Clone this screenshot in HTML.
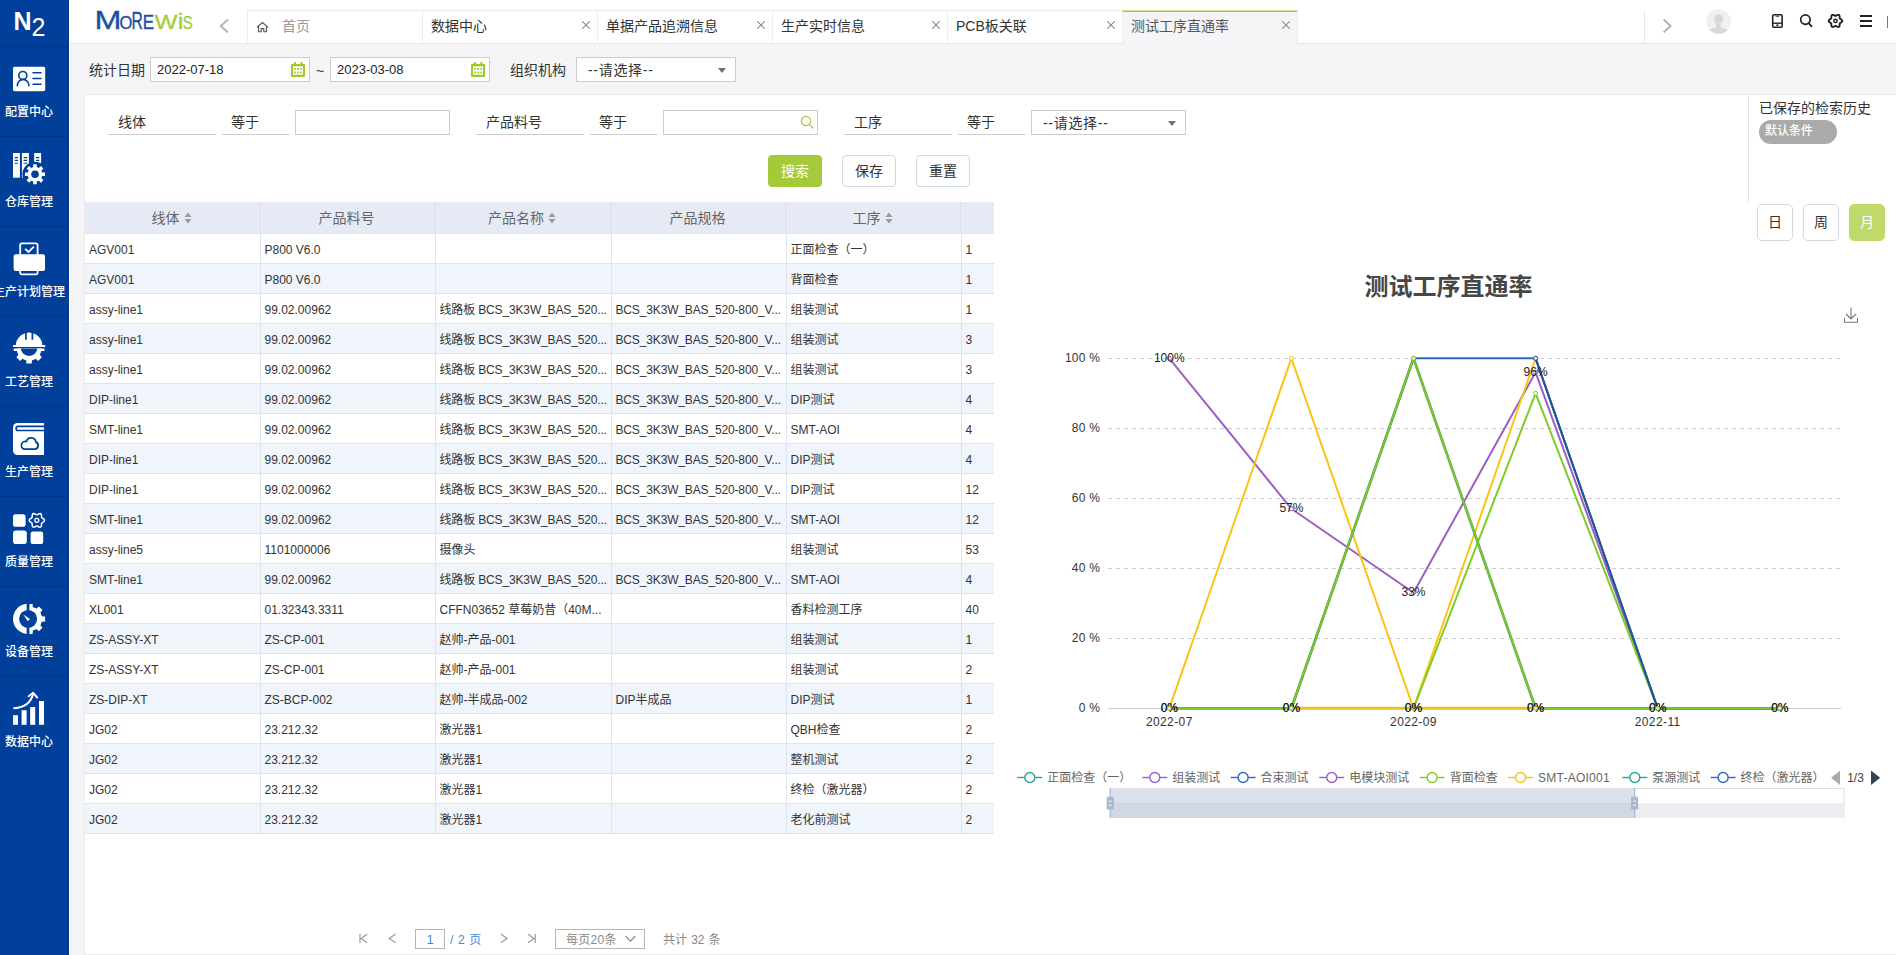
<!DOCTYPE html><html lang="zh"><head><meta charset="utf-8"><title>测试工序直通率</title><style>
*{box-sizing:border-box;margin:0;padding:0}
html,body{width:1896px;height:955px;overflow:hidden;background:#f5f5f7;font-family:"Liberation Sans", "Noto Sans CJK SC", sans-serif;font-size:14px;color:#333}
.abs{position:absolute}
#side{position:absolute;left:0;top:0;width:69px;height:955px;background:#00409a;box-shadow:inset -1px 0 0 #003792,1px 0 0 #fff;z-index:3}
#side .it{position:absolute;left:0;width:69px;height:90px;border-top:1px solid #003585}
#side .it svg{position:absolute;left:12px;top:15px;width:34px;height:36px}
#side .it span{position:absolute;left:-31px;width:120px;top:56px;text-align:center;color:#fff;font-size:12px;line-height:18px;font-weight:500;white-space:nowrap}
#head{position:absolute;left:69px;top:0;width:1827px;height:44px;background:#fff;border-bottom:1px solid #e6e6e6}
.tab{position:absolute;top:10px;height:34px;width:175px;border-left:1px solid #ececec;border-top:1px solid #ececec;font-size:14px;line-height:29px;padding-left:8px;color:#333;white-space:nowrap}
.tab .x{position:absolute;right:7px;top:10px;width:8px;height:8px}
#fbar{position:absolute;left:69px;top:44px;width:1827px;height:51px;background:#f5f5f7}
.inp{position:absolute;background:#fff;border:1px solid #ccc;font-size:13px;line-height:22px;color:#222;padding-left:6px;white-space:nowrap}
#main{position:absolute;left:84px;top:94px;width:1812px;height:861px;background:#fff;border:1px solid #ebebeb;border-right:none}
.lbl{position:absolute;font-size:14px;line-height:20px;color:#333;white-space:nowrap}
.ul{position:absolute;height:1px;background:#ccc}
.btn{position:absolute;top:155px;height:32px;width:54px;border-radius:4px;border:1px solid #d3d7e3;background:#fff;font-size:14px;line-height:30px;text-align:center;color:#333}
table{position:absolute;left:85px;top:202px;border-collapse:collapse;table-layout:fixed;width:909px}
th{height:31px;padding-right:2px;background:#e6eaf5;color:#666;font-weight:normal;font-size:14px;text-align:center;white-space:nowrap;overflow:hidden}
td{height:30px;font-size:12px;color:#333;padding-left:4px;border-right:1px solid #dfe3f0;border-top:1px solid #dfe3f0;white-space:nowrap;overflow:hidden}
tr.e td{background:#f0f4fb}
td:last-child{border-right:none}

td::before,.inp::before,.tab::before,.lbl::before{content:"\200b";font-family:"Noto Sans CJK SC",sans-serif}
</style></head><body>
<div id="side">
<svg class="abs" style="left:0;top:0" width="69" height="46" viewBox="0 0 69 46"><text x="13.5" y="30.3" font-family='&quot;Liberation Sans&quot;, &quot;Noto Sans CJK SC&quot;, sans-serif' font-size="25" font-weight="bold" fill="#fff">N</text><text x="31.5" y="36" font-family='&quot;Liberation Sans&quot;, &quot;Noto Sans CJK SC&quot;, sans-serif' font-size="25" fill="#fff">2</text></svg>
<div class="it" style="top:46px"><svg style="position:absolute;left:0;top:-1px;width:69px;height:90px" viewBox="0 0 69 90"><rect x="13" y="20.7" width="32.2" height="24.5" rx="1.6" fill="#fff"/><circle cx="22.8" cy="29.5" r="4" fill="none" stroke="#00409a" stroke-width="1.6"/><path d="M17.3 39.8 A5.8 6.4 0 0 1 28.9 39.8" fill="none" stroke="#00409a" stroke-width="1.6" stroke-linecap="round"/><path d="M33 26.8H41 M33 32.6H41 M33 38.3H41" stroke="#00409a" stroke-width="1.5" stroke-linecap="round"/></svg><span>配置中心</span></div>
<div class="it" style="top:136px"><svg style="position:absolute;left:0;top:-1px;width:69px;height:90px" viewBox="0 0 69 90"><rect x="13" y="17" width="6.9" height="24.7" fill="#fff"/><rect x="21.9" y="17" width="7" height="24.7" fill="#fff"/><rect x="34.2" y="17" width="6.9" height="14" fill="#fff"/><path d="M14.7 21.6H18 M14.7 24.4H18 M14.7 27.2H18 M23.6 21.6H27 M23.6 24.4H27 M23.6 27.2H27 M36 21.6H39.3 M36 24.4H39.3" stroke="#00409a" stroke-width="1.1"/><circle cx="35" cy="38.3" r="12.6" fill="#00409a"/><path d="M36.78 45.48 L36.78 48.34 L33.22 48.34 L33.22 45.48 L31.18 44.64 L29.16 46.66 L26.64 44.14 L28.66 42.12 L27.82 40.08 L24.96 40.08 L24.96 36.52 L27.82 36.52 L28.66 34.48 L26.64 32.46 L29.16 29.94 L31.18 31.96 L33.22 31.12 L33.22 28.26 L36.78 28.26 L36.78 31.12 L38.82 31.96 L40.84 29.94 L43.36 32.46 L41.34 34.48 L42.18 36.52 L45.04 36.52 L45.04 40.08 L42.18 40.08 L41.34 42.12 L43.36 44.14 L40.84 46.66 L38.82 44.64Z" fill="#fff"/><circle cx="35" cy="38.3" r="3.8" fill="#00409a"/></svg><span>仓库管理</span></div>
<div class="it" style="top:226px"><svg style="position:absolute;left:0;top:-1px;width:69px;height:90px" viewBox="0 0 69 90"><rect x="20.2" y="17.3" width="17.4" height="31" rx="1.8" fill="none" stroke="#fff" stroke-width="1.8"/><rect x="13.6" y="28.3" width="31.4" height="16.7" rx="2" fill="#fff"/><path d="M25.1 22.8L28.6 25.9L33.9 20.7" fill="none" stroke="#fff" stroke-width="1.8"/></svg><span>生产计划管理</span></div>
<div class="it" style="top:316px"><svg style="position:absolute;left:0;top:-1px;width:69px;height:90px" viewBox="0 0 69 90"><clipPath id="cg"><rect x="10" y="32.4" width="40" height="20"/></clipPath><g clip-path="url(#cg)"><path d="M31.95 44.06 L31.78 47.57 L26.42 47.57 L26.25 44.06 L22.73 42.60 L20.13 44.96 L16.34 41.17 L18.70 38.57 L17.24 35.05 L13.73 34.88 L13.73 29.52 L17.24 29.35 L18.70 25.83 L16.34 23.23 L20.13 19.44 L22.73 21.80 L26.25 20.34 L26.42 16.83 L31.78 16.83 L31.95 20.34 L35.47 21.80 L38.07 19.44 L41.86 23.23 L39.50 25.83 L40.96 29.35 L44.47 29.52 L44.47 34.88 L40.96 35.05 L39.50 38.57 L41.86 41.17 L38.07 44.96 L35.47 42.60Z" fill="#fff"/><circle cx="29.1" cy="32.2" r="12.4" fill="#fff"/><circle cx="29.1" cy="31.5" r="8.4" fill="#00409a"/></g><path d="M15.9 29.2 A13.2 12.4 0 0 1 42.3 29.2Z" fill="#fff"/><rect x="13" y="28.9" width="32.2" height="2.2" rx="0.6" fill="#fff"/><path d="M25.9 16.5V23.8 M32.4 16.5V23.8" stroke="#00409a" stroke-width="1.7"/><path d="M29.15 16.5V25.6" stroke="#fff" stroke-width="2.2"/></svg><span>工艺管理</span></div>
<div class="it" style="top:406px"><svg style="position:absolute;left:0;top:-1px;width:69px;height:90px" viewBox="0 0 69 90"><path d="M17.5 17H44V49H17.5A4.5 4.5 0 0 1 13 44.5V21.5A4.5 4.5 0 0 1 17.5 17Z" fill="#fff"/><path d="M44 20.3H18.2A2.1 2.1 0 0 0 18.2 24.5H44" fill="none" stroke="#00409a" stroke-width="1.7"/><path d="M24.2 43.1H34.8A3.6 3.6 0 0 0 36 36.2A4.9 4.9 0 0 0 26.4 35.6A3.9 3.9 0 0 0 24.2 43.1Z" fill="none" stroke="#00409a" stroke-width="1.8" stroke-linejoin="round"/></svg><span>生产管理</span></div>
<div class="it" style="top:496px"><svg style="position:absolute;left:0;top:-1px;width:69px;height:90px" viewBox="0 0 69 90"><rect x="13" y="18.2" width="12.6" height="12.6" rx="2.6" fill="#fff"/><rect x="13" y="34.6" width="13.8" height="13.4" rx="2.8" fill="#fff"/><rect x="30.6" y="35.4" width="12.6" height="12.6" rx="2.6" fill="#fff"/><path d="M44.45 24.35 L44.29 25.00 L43.84 25.58 L43.23 26.06 L42.58 26.44 L42.05 26.77 L41.70 27.15 L41.55 27.64 L41.52 28.27 L41.52 29.02 L41.41 29.79 L41.13 30.47 L40.65 30.93 L40.01 31.12 L39.28 31.02 L38.56 30.73 L37.91 30.36 L37.35 30.06 L36.85 29.95 L36.35 30.06 L35.79 30.36 L35.14 30.73 L34.42 31.02 L33.69 31.12 L33.05 30.93 L32.57 30.47 L32.29 29.79 L32.18 29.02 L32.18 28.27 L32.15 27.64 L32.00 27.15 L31.65 26.77 L31.12 26.44 L30.47 26.06 L29.86 25.58 L29.41 25.00 L29.25 24.35 L29.41 23.70 L29.86 23.12 L30.47 22.64 L31.12 22.26 L31.65 21.93 L32.00 21.55 L32.15 21.06 L32.18 20.43 L32.18 19.68 L32.29 18.91 L32.57 18.23 L33.05 17.77 L33.69 17.58 L34.42 17.68 L35.14 17.97 L35.79 18.34 L36.35 18.64 L36.85 18.75 L37.35 18.64 L37.91 18.34 L38.56 17.97 L39.28 17.68 L40.01 17.58 L40.65 17.77 L41.13 18.23 L41.41 18.91 L41.52 19.68 L41.52 20.43 L41.55 21.06 L41.70 21.55 L42.05 21.93 L42.58 22.26 L43.23 22.64 L43.84 23.12 L44.29 23.70Z" fill="none" stroke="#fff" stroke-width="1.5"/><circle cx="36.85" cy="24.35" r="2" fill="none" stroke="#fff" stroke-width="1.3"/></svg><span>质量管理</span></div>
<div class="it" style="top:586px"><svg style="position:absolute;left:0;top:-1px;width:69px;height:90px" viewBox="0 0 69 90"><clipPath id="cl"><rect x="10" y="14" width="16.8" height="40"/></clipPath><clipPath id="cr"><rect x="29.3" y="14" width="20" height="40"/></clipPath><g clip-path="url(#cl)"><circle cx="28.1" cy="32.9" r="15.1" fill="#fff"/></g><g clip-path="url(#cr)"><path d="M41.57 30.15 L45.09 30.40 L45.09 35.40 L41.57 35.65 L40.16 39.07 L42.47 41.74 L38.94 45.27 L36.27 42.96 L32.85 44.37 L32.60 47.89 L27.60 47.89 L27.35 44.37 L23.93 42.96 L21.26 45.27 L17.73 41.74 L20.04 39.07 L18.63 35.65 L15.11 35.40 L15.11 30.40 L18.63 30.15 L20.04 26.73 L17.73 24.06 L21.26 20.53 L23.93 22.84 L27.35 21.43 L27.60 17.91 L32.60 17.91 L32.85 21.43 L36.27 22.84 L38.94 20.53 L42.47 24.06 L40.16 26.73Z" fill="#fff"/><circle cx="30.1" cy="32.9" r="11.9" fill="#fff"/></g><circle cx="28.1" cy="32.9" r="9" fill="#00409a"/><rect x="26.8" y="14" width="2.5" height="40" fill="#00409a"/><path d="M23.4 28.6L30 32.9L27.7 35.3Z" fill="#fff"/></svg><span>设备管理</span></div>
<div class="it" style="top:676px"><svg style="position:absolute;left:0;top:-1px;width:69px;height:90px" viewBox="0 0 69 90"><rect x="13" y="39.2" width="5" height="9.6" fill="#fff"/><rect x="21.6" y="34.2" width="5" height="14.6" fill="#fff"/><rect x="30.2" y="31" width="5" height="17.8" fill="#fff"/><rect x="39" y="25" width="5" height="23.8" fill="#fff"/><path d="M14.2 32.2C24 31.5 31 27 33.2 17.5" fill="none" stroke="#fff" stroke-width="2" stroke-linecap="round"/><path d="M28.6 20.3L33.2 16.8L37.2 21.5" fill="none" stroke="#fff" stroke-width="2" stroke-linecap="round" stroke-linejoin="round"/></svg><span>数据中心</span></div>
</div>
<div id="head">
<svg style="position:absolute;left:0;top:0" width="1827" height="44" viewBox="0 0 1827 44"><g transform="translate(-69,0)"><text transform="translate(94.61,28.90) scale(0.3235,0.2551)" font-family="&quot;Liberation Sans&quot;, sans-serif" font-size="100" fill="#1d4f9f" stroke="#1d4f9f" stroke-width="0.35" style="vector-effect:non-scaling-stroke" vector-effect="non-scaling-stroke">M</text><text transform="translate(119.54,28.72) scale(0.1652,0.1789)" font-family="&quot;Liberation Sans&quot;, sans-serif" font-size="100" fill="#1d4f9f" stroke="#1d4f9f" stroke-width="0.35" style="vector-effect:non-scaling-stroke" vector-effect="non-scaling-stroke">O</text><text transform="translate(131.55,28.90) scale(0.1567,0.2357)" font-family="&quot;Liberation Sans&quot;, sans-serif" font-size="100" fill="#1d4f9f" stroke="#1d4f9f" stroke-width="0.35" style="vector-effect:non-scaling-stroke" vector-effect="non-scaling-stroke">R</text><text transform="translate(142.85,28.90) scale(0.1691,0.1986)" font-family="&quot;Liberation Sans&quot;, sans-serif" font-size="100" fill="#1d4f9f" stroke="#1d4f9f" stroke-width="0.35" style="vector-effect:non-scaling-stroke" vector-effect="non-scaling-stroke">E</text><text transform="translate(154.50,28.90) scale(0.2432,0.1986)" font-family="&quot;Liberation Sans&quot;, sans-serif" font-size="100" fill="#a6cd39" stroke="#a6cd39" stroke-width="0.35" style="vector-effect:non-scaling-stroke" vector-effect="non-scaling-stroke">W</text><text transform="translate(177.64,28.90) scale(0.2600,0.2260)" font-family="&quot;Liberation Sans&quot;, sans-serif" font-size="100" fill="#a6cd39" stroke="#a6cd39" stroke-width="0.35" style="vector-effect:non-scaling-stroke" vector-effect="non-scaling-stroke">i</text><text transform="translate(182.80,28.72) scale(0.1508,0.1847)" font-family="&quot;Liberation Sans&quot;, sans-serif" font-size="100" fill="#a6cd39" stroke="#a6cd39" stroke-width="0.35" style="vector-effect:non-scaling-stroke" vector-effect="non-scaling-stroke">S</text><path d="M228 19.4L220.8 26L228 32.6" fill="none" stroke="#b4b4b4" stroke-width="2"/><path d="M1644.5 10V43" stroke="#e6e6e6" stroke-width="1"/><path d="M1663.6 19.4L1670.6 26L1663.6 32.6" fill="none" stroke="#b4b4b4" stroke-width="2"/><clipPath id="av"><circle cx="1718.5" cy="21.5" r="12.3"/></clipPath><circle cx="1718.5" cy="21.5" r="12.3" fill="#f0f0f0"/><g clip-path="url(#av)" fill="#d9d9d9"><ellipse cx="1718.5" cy="19.3" rx="4.6" ry="5.4"/><path d="M1716.3 23h4.4v4.2c3 .8 6.6 1.8 7.8 3.2v6h-20v-6c1.2-1.4 4.8-2.4 7.8-3.2z"/></g><rect x="1772.7" y="14.7" width="9.4" height="12.6" rx="1.4" fill="none" stroke="#222" stroke-width="1.6"/><path d="M1772.7 23.2H1782.1" stroke="#222" stroke-width="1.4"/><path d="M1775.6 16.3H1779.2" stroke="#222" stroke-width="0.9"/><rect x="1776.4" y="24.4" width="2" height="1.6" fill="#222"/><circle cx="1805.4" cy="19.6" r="4.7" fill="none" stroke="#222" stroke-width="1.7"/><path d="M1808.9 23.3L1811.6 26.3" stroke="#222" stroke-width="1.8" stroke-linecap="round"/><path d="M1842.30 20.90 L1842.15 21.48 L1841.75 22.00 L1841.20 22.43 L1840.62 22.76 L1840.14 23.06 L1839.83 23.40 L1839.69 23.84 L1839.67 24.40 L1839.67 25.07 L1839.58 25.76 L1839.33 26.37 L1838.90 26.79 L1838.32 26.95 L1837.67 26.87 L1837.03 26.60 L1836.45 26.27 L1835.95 26.00 L1835.50 25.90 L1835.05 26.00 L1834.55 26.27 L1833.97 26.60 L1833.33 26.87 L1832.68 26.95 L1832.10 26.79 L1831.67 26.37 L1831.42 25.76 L1831.33 25.07 L1831.33 24.40 L1831.31 23.84 L1831.17 23.40 L1830.86 23.06 L1830.38 22.76 L1829.80 22.43 L1829.25 22.00 L1828.85 21.48 L1828.70 20.90 L1828.85 20.32 L1829.25 19.80 L1829.80 19.37 L1830.38 19.04 L1830.86 18.74 L1831.17 18.40 L1831.31 17.96 L1831.33 17.40 L1831.33 16.73 L1831.42 16.04 L1831.67 15.43 L1832.10 15.01 L1832.68 14.85 L1833.33 14.93 L1833.97 15.20 L1834.55 15.53 L1835.05 15.80 L1835.50 15.90 L1835.95 15.80 L1836.45 15.53 L1837.03 15.20 L1837.67 14.93 L1838.32 14.85 L1838.90 15.01 L1839.33 15.43 L1839.58 16.04 L1839.67 16.73 L1839.67 17.40 L1839.69 17.96 L1839.83 18.40 L1840.14 18.74 L1840.62 19.04 L1841.20 19.37 L1841.75 19.80 L1842.15 20.32Z" fill="none" stroke="#222" stroke-width="1.9" stroke-linejoin="round"/><circle cx="1835.5" cy="20.9" r="1.7" fill="none" stroke="#222" stroke-width="1.5"/><path d="M1860 16H1872 M1860 21H1872 M1860 26H1872" stroke="#222" stroke-width="2"/><path d="M1887.5 16V28" stroke="#777" stroke-width="1"/></g></svg>
<div class="tab" style="left:178px;color:#999;padding-left:34px"><svg style="position:absolute;left:7.5px;top:10px" width="13" height="12" viewBox="0 0 13 12"><path d="M0.8 6.4L6.5 1.5L12.2 6.4 M2.6 5.2V10.8H5.2V7.6H7.8V10.8H10.4V5.2" fill="none" stroke="#555" stroke-width="1.1" stroke-linejoin="round"/></svg>首页</div>
<div class="tab" style="left:353px">数据中心<svg class="x" viewBox="0 0 8 8"><path d="M0.3 0.3L7.7 7.7M7.7 0.3L0.3 7.7" stroke="#8a8a8a" stroke-width="1.1" fill="none"/></svg></div>
<div class="tab" style="left:528px">单据产品追溯信息<svg class="x" viewBox="0 0 8 8"><path d="M0.3 0.3L7.7 7.7M7.7 0.3L0.3 7.7" stroke="#8a8a8a" stroke-width="1.1" fill="none"/></svg></div>
<div class="tab" style="left:703px">生产实时信息<svg class="x" viewBox="0 0 8 8"><path d="M0.3 0.3L7.7 7.7M7.7 0.3L0.3 7.7" stroke="#8a8a8a" stroke-width="1.1" fill="none"/></svg></div>
<div class="tab" style="left:878px">PCB板关联<svg class="x" viewBox="0 0 8 8"><path d="M0.3 0.3L7.7 7.7M7.7 0.3L0.3 7.7" stroke="#8a8a8a" stroke-width="1.1" fill="none"/></svg></div>
<div class="tab" style="left:1053px;width:176px;height:35px;background:#f5f5f7;border-top:1px solid #cfe38f;box-shadow:inset 0 1px 0 #a4cb38;border-right:1px solid #ececec;line-height:29px;color:#555">测试工序直通率<svg class="x" viewBox="0 0 8 8"><path d="M0.3 0.3L7.7 7.7M7.7 0.3L0.3 7.7" stroke="#8a8a8a" stroke-width="1.1" fill="none"/></svg></div>
</div>
<div id="fbar"></div>
<div class="lbl" style="left:89px;top:59px">统计日期</div>
<div class="inp" style="left:150px;top:57px;width:160px;height:25px">2022-07-18<svg style="position:absolute;right:4px;top:4px" width="14" height="15" viewBox="0 0 14 15"><rect x="0" y="2.1" width="14" height="12.9" rx="1.2" fill="#a0c828"/><rect x="2.8" y="0" width="2.1" height="4" rx="0.6" fill="#a0c828"/><rect x="9.4" y="0" width="2.1" height="4" rx="0.6" fill="#a0c828"/><rect x="2" y="4.3" width="10" height="8.4" fill="#fff"/><path d="M3 6h1.8v1.8H3z M6.1 6h1.8v1.8H6.1z M9.3 6h1.8v1.8H9.3z M3 9.4h1.8v1.8H3z M6.1 9.4h1.8v1.8H6.1z M9.3 9.4h1.8v1.8H9.3z" fill="#a0c828"/></svg></div>
<div class="lbl" style="left:316px;top:60px">~</div>
<div class="inp" style="left:330px;top:57px;width:160px;height:25px">2023-03-08<svg style="position:absolute;right:4px;top:4px" width="14" height="15" viewBox="0 0 14 15"><rect x="0" y="2.1" width="14" height="12.9" rx="1.2" fill="#a0c828"/><rect x="2.8" y="0" width="2.1" height="4" rx="0.6" fill="#a0c828"/><rect x="9.4" y="0" width="2.1" height="4" rx="0.6" fill="#a0c828"/><rect x="2" y="4.3" width="10" height="8.4" fill="#fff"/><path d="M3 6h1.8v1.8H3z M6.1 6h1.8v1.8H6.1z M9.3 6h1.8v1.8H9.3z M3 9.4h1.8v1.8H3z M6.1 9.4h1.8v1.8H6.1z M9.3 9.4h1.8v1.8H9.3z" fill="#a0c828"/></svg></div>
<div class="lbl" style="left:510px;top:59px">组织机构</div>
<div class="inp" style="left:576px;top:57px;width:160px;height:25px;padding-left:11px;font-size:14px;letter-spacing:0.7px;color:#333">--请选择--<i class="abs" style="right:9px;top:10px;border:4px solid transparent;border-top:5px solid #707070;border-bottom:none"></i></div>
<div id="main"></div>
<div class="lbl" style="left:118px;top:111px">线体</div>
<div class="ul" style="left:108px;top:134px;width:108px"></div>
<div class="lbl" style="left:231px;top:111px">等于</div>
<div class="ul" style="left:222px;top:134px;width:67px"></div>
<div class="inp" style="left:295px;top:110px;width:155px;height:25px"></div>
<div class="lbl" style="left:486px;top:111px">产品料号</div>
<div class="ul" style="left:476px;top:134px;width:108px"></div>
<div class="lbl" style="left:599px;top:111px">等于</div>
<div class="ul" style="left:590px;top:134px;width:67px"></div>
<div class="inp" style="left:663px;top:110px;width:155px;height:25px"><svg style="position:absolute;right:3px;top:4px" width="14" height="14" viewBox="0 0 14 14"><circle cx="6" cy="6" r="4.6" fill="none" stroke="#a5ca39" stroke-width="1.2"/><path d="M9.4 9.4L13 13" stroke="#a5ca39" stroke-width="1.3" stroke-linecap="round"/></svg></div>
<div class="lbl" style="left:854px;top:111px">工序</div>
<div class="ul" style="left:844px;top:134px;width:108px"></div>
<div class="lbl" style="left:967px;top:111px">等于</div>
<div class="ul" style="left:958px;top:134px;width:67px"></div>
<div class="inp" style="left:1031px;top:110px;width:155px;height:25px;padding-left:11px;font-size:14px;letter-spacing:0.7px;color:#333">--请选择--<i class="abs" style="right:9px;top:10px;border:4px solid transparent;border-top:5px solid #707070;border-bottom:none"></i></div>
<div class="btn" style="left:768px;background:#a5ca39;border-color:#a5ca39;color:#fff">搜索</div>
<div class="btn" style="left:842px">保存</div>
<div class="btn" style="left:916px">重置</div>
<div class="abs" style="left:1748px;top:95px;width:1px;height:107px;background:#e4e4e4"></div>
<div class="lbl" style="left:1759px;top:97px">已保存的检索历史</div>
<div class="abs" style="left:1759px;top:120px;width:78px;height:24px;border-radius:12px;background:#aaa;color:#fff;font-size:12px;line-height:22px;padding-left:6px;font-weight:500">默认条件</div>
<div class="btn" style="left:1757px;top:204px;width:36px;height:37px;line-height:35px;border-radius:5px;">日</div>
<div class="btn" style="left:1803px;top:204px;width:36px;height:37px;line-height:35px;border-radius:5px;">周</div>
<div class="btn" style="left:1849px;top:204px;width:36px;height:37px;line-height:35px;border-radius:5px;background:#bfd96b;border-color:#bfd96b;color:#fff">月</div>
<table><colgroup><col style="width:175px"><col style="width:175px"><col style="width:176px"><col style="width:175px"><col style="width:175px"><col style="width:33px"></colgroup>
<tr><th>线体<svg width="8" height="12" viewBox="0 0 8 12" style="margin-left:4px;vertical-align:-1px"><path d="M4 0.5L7.5 5H0.5Z M4 11.5L7.5 7H0.5Z" fill="#999"/></svg></th><th>产品料号</th><th>产品名称<svg width="8" height="12" viewBox="0 0 8 12" style="margin-left:4px;vertical-align:-1px"><path d="M4 0.5L7.5 5H0.5Z M4 11.5L7.5 7H0.5Z" fill="#999"/></svg></th><th>产品规格</th><th>工序<svg width="8" height="12" viewBox="0 0 8 12" style="margin-left:4px;vertical-align:-1px"><path d="M4 0.5L7.5 5H0.5Z M4 11.5L7.5 7H0.5Z" fill="#999"/></svg></th><th></th></tr>
<tr><td>AGV001</td><td>P800 V6.0</td><td></td><td></td><td>正面检查（一）</td><td>1</td></tr>
<tr class="e"><td>AGV001</td><td>P800 V6.0</td><td></td><td></td><td>背面检查</td><td>1</td></tr>
<tr><td>assy-line1</td><td>99.02.00962</td><td style="letter-spacing:-0.15px">线路板 BCS_3K3W_BAS_520...</td><td style="letter-spacing:-0.15px">BCS_3K3W_BAS_520-800_V...</td><td>组装测试</td><td>1</td></tr>
<tr class="e"><td>assy-line1</td><td>99.02.00962</td><td style="letter-spacing:-0.15px">线路板 BCS_3K3W_BAS_520...</td><td style="letter-spacing:-0.15px">BCS_3K3W_BAS_520-800_V...</td><td>组装测试</td><td>3</td></tr>
<tr><td>assy-line1</td><td>99.02.00962</td><td style="letter-spacing:-0.15px">线路板 BCS_3K3W_BAS_520...</td><td style="letter-spacing:-0.15px">BCS_3K3W_BAS_520-800_V...</td><td>组装测试</td><td>3</td></tr>
<tr class="e"><td>DIP-line1</td><td>99.02.00962</td><td style="letter-spacing:-0.15px">线路板 BCS_3K3W_BAS_520...</td><td style="letter-spacing:-0.15px">BCS_3K3W_BAS_520-800_V...</td><td>DIP测试</td><td>4</td></tr>
<tr><td>SMT-line1</td><td>99.02.00962</td><td style="letter-spacing:-0.15px">线路板 BCS_3K3W_BAS_520...</td><td style="letter-spacing:-0.15px">BCS_3K3W_BAS_520-800_V...</td><td>SMT-AOI</td><td>4</td></tr>
<tr class="e"><td>DIP-line1</td><td>99.02.00962</td><td style="letter-spacing:-0.15px">线路板 BCS_3K3W_BAS_520...</td><td style="letter-spacing:-0.15px">BCS_3K3W_BAS_520-800_V...</td><td>DIP测试</td><td>4</td></tr>
<tr><td>DIP-line1</td><td>99.02.00962</td><td style="letter-spacing:-0.15px">线路板 BCS_3K3W_BAS_520...</td><td style="letter-spacing:-0.15px">BCS_3K3W_BAS_520-800_V...</td><td>DIP测试</td><td>12</td></tr>
<tr class="e"><td>SMT-line1</td><td>99.02.00962</td><td style="letter-spacing:-0.15px">线路板 BCS_3K3W_BAS_520...</td><td style="letter-spacing:-0.15px">BCS_3K3W_BAS_520-800_V...</td><td>SMT-AOI</td><td>12</td></tr>
<tr><td>assy-line5</td><td>1101000006</td><td>摄像头</td><td></td><td>组装测试</td><td>53</td></tr>
<tr class="e"><td>SMT-line1</td><td>99.02.00962</td><td style="letter-spacing:-0.15px">线路板 BCS_3K3W_BAS_520...</td><td style="letter-spacing:-0.15px">BCS_3K3W_BAS_520-800_V...</td><td>SMT-AOI</td><td>4</td></tr>
<tr><td>XL001</td><td>01.32343.3311</td><td>CFFN03652 草莓奶昔（40M...</td><td></td><td>香料检测工序</td><td>40</td></tr>
<tr class="e"><td>ZS-ASSY-XT</td><td>ZS-CP-001</td><td>赵帅-产品-001</td><td></td><td>组装测试</td><td>1</td></tr>
<tr><td>ZS-ASSY-XT</td><td>ZS-CP-001</td><td>赵帅-产品-001</td><td></td><td>组装测试</td><td>2</td></tr>
<tr class="e"><td>ZS-DIP-XT</td><td>ZS-BCP-002</td><td>赵帅-半成品-002</td><td>DIP半成品</td><td>DIP测试</td><td>1</td></tr>
<tr><td>JG02</td><td>23.212.32</td><td>激光器1</td><td></td><td>QBH检查</td><td>2</td></tr>
<tr class="e"><td>JG02</td><td>23.212.32</td><td>激光器1</td><td></td><td>整机测试</td><td>2</td></tr>
<tr><td>JG02</td><td>23.212.32</td><td>激光器1</td><td></td><td>终检（激光器）</td><td>2</td></tr>
<tr class="e"><td>JG02</td><td>23.212.32</td><td>激光器1</td><td></td><td>老化前测试</td><td>2</td></tr>
</table>
<div class="abs" style="left:258px;top:202px;width:2px;height:31px;border-left:1px solid #eaedf7;background:#d9deee"></div>
<div class="abs" style="left:433px;top:202px;width:2px;height:31px;border-left:1px solid #eaedf7;background:#d9deee"></div>
<div class="abs" style="left:609px;top:202px;width:2px;height:31px;border-left:1px solid #eaedf7;background:#d9deee"></div>
<div class="abs" style="left:784px;top:202px;width:2px;height:31px;border-left:1px solid #eaedf7;background:#d9deee"></div>
<div class="abs" style="left:959px;top:202px;width:2px;height:31px;border-left:1px solid #eaedf7;background:#d9deee"></div>
<div class="abs" style="left:85px;top:833px;width:909px;height:1px;background:#dfe3f0"></div>
<svg class="abs" style="left:355px;top:925px" width="190" height="28" viewBox="355 925 190 28" fill="none" stroke="#999" stroke-width="1.2"><path d="M360 934V943 M367 934.2L361.2 938.5L367 942.8"/><path d="M395.6 934L389.2 938.4L395.6 942.8"/><path d="M500.8 934L507 938.4L500.8 942.8"/><path d="M535.2 934V943 M528.2 934.2L534 938.5L528.2 942.8"/></svg><div class="abs" style="left:415px;top:929px;width:30px;height:20px;border:1px solid #b5b5b5;background:#fff;color:#3a8ee6;font-size:13px;line-height:20px;text-align:center">1</div><div class="abs" style="left:450px;top:929px;color:#3a8ee6;font-size:12px;line-height:22px;word-spacing:1.3px;white-space:nowrap">/ 2 页</div><div class="abs" style="left:555px;top:929px;width:90px;height:20px;border:1px solid #b5b5b5;background:#fff;color:#888;font-size:12px;line-height:20px;letter-spacing:0.3px;padding-left:10px;white-space:nowrap">每页20条<svg style="position:absolute;right:8px;top:5px" width="11" height="8" viewBox="0 0 11 8"><path d="M0.6 1L5.5 6.2L10.4 1" fill="none" stroke="#888" stroke-width="1.1"/></svg></div><div class="abs" style="left:663px;top:929px;color:#888;font-size:12px;line-height:22px;word-spacing:0.8px;white-space:nowrap">共计 32 条</div>
<svg class="abs" style="left:1000px;top:250px" width="896" height="590" viewBox="1000 250 896 590" font-family="&quot;Liberation Sans&quot;, &quot;Noto Sans CJK SC&quot;, sans-serif"><text x="1448.5" y="294.5" text-anchor="middle" font-size="24" font-weight="bold" fill="#464646">测试工序直通率</text><path d="M1851 307.5V318.5 M1846 314L1851 319L1856 314 M1844.5 318V322.2H1857.5V318" fill="none" stroke="#777" stroke-width="1.1"/><path d="M1108 638.5H1841" stroke="#ccc" stroke-width="1" stroke-dasharray="4 4"/><path d="M1108 568.5H1841" stroke="#ccc" stroke-width="1" stroke-dasharray="4 4"/><path d="M1108 498.5H1841" stroke="#ccc" stroke-width="1" stroke-dasharray="4 4"/><path d="M1108 428.5H1841" stroke="#ccc" stroke-width="1" stroke-dasharray="4 4"/><path d="M1108 358.5H1841" stroke="#ccc" stroke-width="1" stroke-dasharray="4 4"/><path d="M1108 708.5H1841" stroke="#ccc" stroke-width="1"/><text x="1100.2" y="711.9" text-anchor="end" font-size="12" letter-spacing="0.25" fill="#333">0 %</text><text x="1100.2" y="641.9" text-anchor="end" font-size="12" letter-spacing="0.25" fill="#333">20 %</text><text x="1100.2" y="571.9" text-anchor="end" font-size="12" letter-spacing="0.25" fill="#333">40 %</text><text x="1100.2" y="501.9" text-anchor="end" font-size="12" letter-spacing="0.25" fill="#333">60 %</text><text x="1100.2" y="431.9" text-anchor="end" font-size="12" letter-spacing="0.25" fill="#333">80 %</text><text x="1100.2" y="361.9" text-anchor="end" font-size="12" letter-spacing="0.25" fill="#333">100 %</text><text x="1169.3" y="726" text-anchor="middle" font-size="12" letter-spacing="0.4" fill="#333">2022-07</text><text x="1413.5" y="726" text-anchor="middle" font-size="12" letter-spacing="0.4" fill="#333">2022-09</text><text x="1657.7" y="726" text-anchor="middle" font-size="12" letter-spacing="0.4" fill="#333">2022-11</text><polyline points="1169.3,358.3 1291.4,508.8 1413.5,592.8 1535.6,372.3 1657.7,708.3 1779.8,708.3" fill="none" stroke="#9b5fc6" stroke-width="2.0" stroke-linejoin="bevel"/><circle cx="1169.3" cy="358.3" r="2" fill="#fff" stroke="#9b5fc6" stroke-width="1"/><circle cx="1291.4" cy="508.8" r="2" fill="#fff" stroke="#9b5fc6" stroke-width="1"/><circle cx="1413.5" cy="592.8" r="2" fill="#fff" stroke="#9b5fc6" stroke-width="1"/><circle cx="1535.6" cy="372.3" r="2" fill="#fff" stroke="#9b5fc6" stroke-width="1"/><circle cx="1657.7" cy="708.3" r="2" fill="#fff" stroke="#9b5fc6" stroke-width="1"/><circle cx="1779.8" cy="708.3" r="2" fill="#fff" stroke="#9b5fc6" stroke-width="1"/><polyline points="1291.4,708.3 1413.5,708.3 1535.6,708.3" fill="none" stroke="#e6c419" stroke-width="3.0" stroke-linejoin="bevel"/><polyline points="1169.3,708.3 1291.4,358.3 1413.5,708.3 1535.6,358.3 1657.7,708.3 1779.8,708.3" fill="none" stroke="#fbc417" stroke-width="2.0" stroke-linejoin="bevel"/><circle cx="1169.3" cy="708.3" r="2" fill="#fff" stroke="#fbc417" stroke-width="1"/><circle cx="1291.4" cy="358.3" r="2" fill="#fff" stroke="#fbc417" stroke-width="1"/><circle cx="1413.5" cy="708.3" r="2" fill="#fff" stroke="#fbc417" stroke-width="1"/><circle cx="1535.6" cy="358.3" r="2" fill="#fff" stroke="#fbc417" stroke-width="1"/><circle cx="1657.7" cy="708.3" r="2" fill="#fff" stroke="#fbc417" stroke-width="1"/><circle cx="1779.8" cy="708.3" r="2" fill="#fff" stroke="#fbc417" stroke-width="1"/><polyline points="1413.5,708.3 1535.6,393.3 1657.7,708.3 1779.8,708.3" fill="none" stroke="#7fcc27" stroke-width="2.0" stroke-linejoin="bevel"/><circle cx="1413.5" cy="708.3" r="2" fill="#fff" stroke="#7fcc27" stroke-width="1"/><circle cx="1535.6" cy="393.3" r="2" fill="#fff" stroke="#7fcc27" stroke-width="1"/><circle cx="1657.7" cy="708.3" r="2" fill="#fff" stroke="#7fcc27" stroke-width="1"/><circle cx="1779.8" cy="708.3" r="2" fill="#fff" stroke="#7fcc27" stroke-width="1"/><polyline points="1291.4,708.3 1413.5,358.3 1535.6,358.3 1657.7,708.3 1779.8,708.3" fill="none" stroke="#2f6ac0" stroke-width="2.0" stroke-linejoin="bevel"/><circle cx="1291.4" cy="708.3" r="2" fill="#fff" stroke="#2f6ac0" stroke-width="1"/><circle cx="1413.5" cy="358.3" r="2" fill="#fff" stroke="#2f6ac0" stroke-width="1"/><circle cx="1535.6" cy="358.3" r="2" fill="#fff" stroke="#2f6ac0" stroke-width="1"/><circle cx="1657.7" cy="708.3" r="2" fill="#fff" stroke="#2f6ac0" stroke-width="1"/><circle cx="1779.8" cy="708.3" r="2" fill="#fff" stroke="#2f6ac0" stroke-width="1"/><polyline points="1535.6,358.3 1657.7,708.3 1779.8,708.3" fill="none" stroke="#20569f" stroke-width="2.0" stroke-linejoin="bevel"/><circle cx="1535.6" cy="358.3" r="2" fill="#fff" stroke="#20569f" stroke-width="1"/><circle cx="1657.7" cy="708.3" r="2" fill="#fff" stroke="#20569f" stroke-width="1"/><circle cx="1779.8" cy="708.3" r="2" fill="#fff" stroke="#20569f" stroke-width="1"/><polyline points="1169.3,708.3 1291.4,708.3 1413.5,358.3 1535.6,708.3 1657.7,708.3 1779.8,708.3" fill="none" stroke="#5c9c57" stroke-width="2.7" stroke-linejoin="bevel"/><polyline points="1169.3,708.3 1291.4,708.3 1413.5,358.3 1535.6,708.3 1657.7,708.3 1779.8,708.3" fill="none" stroke="#7acb2b" stroke-width="1.7" stroke-linejoin="bevel"/><text x="1169.3" y="361.8" text-anchor="middle" font-size="12" fill="#222">100%</text><text x="1291.4" y="512.3" text-anchor="middle" font-size="12" fill="#222">57%</text><text x="1413.5" y="596.3" text-anchor="middle" font-size="12" fill="#222">33%</text><text x="1535.6" y="375.8" text-anchor="middle" font-size="12" fill="#222">96%</text><text x="1169.3" y="711.8" text-anchor="middle" font-size="12" fill="#222">0%</text><text x="1169.3" y="711.8" text-anchor="middle" font-size="12" fill="#222">0%</text><text x="1291.4" y="711.8" text-anchor="middle" font-size="12" fill="#222">0%</text><text x="1291.4" y="711.8" text-anchor="middle" font-size="12" fill="#222">0%</text><text x="1413.5" y="711.8" text-anchor="middle" font-size="12" fill="#222">0%</text><text x="1413.5" y="711.8" text-anchor="middle" font-size="12" fill="#222">0%</text><text x="1535.6" y="711.8" text-anchor="middle" font-size="12" fill="#222">0%</text><text x="1535.6" y="711.8" text-anchor="middle" font-size="12" fill="#222">0%</text><text x="1657.7" y="711.8" text-anchor="middle" font-size="12" fill="#222">0%</text><text x="1657.7" y="711.8" text-anchor="middle" font-size="12" fill="#222">0%</text><text x="1779.8" y="711.8" text-anchor="middle" font-size="12" fill="#222">0%</text><text x="1779.8" y="711.8" text-anchor="middle" font-size="12" fill="#222">0%</text><circle cx="1169.3" cy="708.3" r="2" fill="#fff" fill-opacity="0.85" stroke="#76c62a" stroke-width="1"/><circle cx="1291.4" cy="708.3" r="2" fill="#fff" fill-opacity="0.85" stroke="#76c62a" stroke-width="1"/><circle cx="1413.5" cy="358.3" r="2" fill="#fff" fill-opacity="0.85" stroke="#76c62a" stroke-width="1"/><circle cx="1535.6" cy="708.3" r="2" fill="#fff" fill-opacity="0.85" stroke="#76c62a" stroke-width="1"/><circle cx="1657.7" cy="708.3" r="2" fill="#fff" fill-opacity="0.85" stroke="#76c62a" stroke-width="1"/><circle cx="1779.8" cy="708.3" r="2" fill="#fff" fill-opacity="0.85" stroke="#76c62a" stroke-width="1"/><path d="M1017.3 777.5H1042.3" stroke="#2aa39a" stroke-width="1.4"/><circle cx="1029.8" cy="777.5" r="5" fill="#fff" stroke="#2aa39a" stroke-width="1.4"/><text x="1047.3" y="781.6" font-size="12" letter-spacing="0" fill="#666">正面检查（一）</text><path d="M1142.3 777.5H1167.3" stroke="#9b5fc6" stroke-width="1.4"/><circle cx="1154.8" cy="777.5" r="5" fill="#fff" stroke="#9b5fc6" stroke-width="1.4"/><text x="1172.3" y="781.6" font-size="12" letter-spacing="0" fill="#666">组装测试</text><path d="M1230.6 777.5H1255.6" stroke="#2f6ac0" stroke-width="1.4"/><circle cx="1243.1" cy="777.5" r="5" fill="#fff" stroke="#2f6ac0" stroke-width="1.4"/><text x="1260.6" y="781.6" font-size="12" letter-spacing="0" fill="#666">合束测试</text><path d="M1319.2 777.5H1344.2" stroke="#9b5fc6" stroke-width="1.4"/><circle cx="1331.7" cy="777.5" r="5" fill="#fff" stroke="#9b5fc6" stroke-width="1.4"/><text x="1349.2" y="781.6" font-size="12" letter-spacing="0" fill="#666">电模块测试</text><path d="M1419.7 777.5H1444.7" stroke="#7fcc27" stroke-width="1.4"/><circle cx="1432.2" cy="777.5" r="5" fill="#fff" stroke="#7fcc27" stroke-width="1.4"/><text x="1449.7" y="781.6" font-size="12" letter-spacing="0" fill="#666">背面检查</text><path d="M1508.0 777.5H1533.0" stroke="#fbc417" stroke-width="1.4"/><circle cx="1520.5" cy="777.5" r="5" fill="#fff" stroke="#fbc417" stroke-width="1.4"/><text x="1538.0" y="781.6" font-size="12" letter-spacing="0.25" fill="#666">SMT-AOI001</text><path d="M1622.3 777.5H1647.3" stroke="#2aa39a" stroke-width="1.4"/><circle cx="1634.8" cy="777.5" r="5" fill="#fff" stroke="#2aa39a" stroke-width="1.4"/><text x="1652.3" y="781.6" font-size="12" letter-spacing="0" fill="#666">泵源测试</text><path d="M1710.6 777.5H1735.6" stroke="#2f6ac0" stroke-width="1.4"/><circle cx="1723.1" cy="777.5" r="5" fill="#fff" stroke="#2f6ac0" stroke-width="1.4"/><text x="1740.6" y="781.6" font-size="12" letter-spacing="0" fill="#666">终检（激光器）</text><path d="M1840 770.5V785L1831.2 777.7Z" fill="#aaa"/><text x="1855.5" y="781.6" text-anchor="middle" font-size="12" fill="#444">1/3</text><path d="M1871 770.5V785L1880.2 777.7Z" fill="#2f4554"/><rect x="1110.5" y="788.5" width="733.5" height="29" fill="#fff" stroke="#ddd" stroke-width="1"/><rect x="1110" y="803" width="734.5" height="15" fill="#ebedf0"/><rect x="1110" y="788" width="524.5" height="15.3" fill="#dbe1ec"/><rect x="1110" y="803.3" width="524.5" height="14.7" fill="#d0d8e3"/><path d="M1110 803.3H1634.5" stroke="#c8d0dd" stroke-width="1"/><path d="M1110.2 788V818" stroke="#a7b7cc" stroke-width="1.2"/><rect x="1106.7" y="796.8" width="7" height="12.8" rx="1.2" fill="#a7b7cc"/><path d="M1108.7 801.2h3 M1108.7 805.2h3" stroke="#fff" stroke-width="1"/><path d="M1634.6 788V818" stroke="#a7b7cc" stroke-width="1.2"/><rect x="1631.1" y="796.8" width="7" height="12.8" rx="1.2" fill="#a7b7cc"/><path d="M1633.1 801.2h3 M1633.1 805.2h3" stroke="#fff" stroke-width="1"/></svg>
</body></html>
